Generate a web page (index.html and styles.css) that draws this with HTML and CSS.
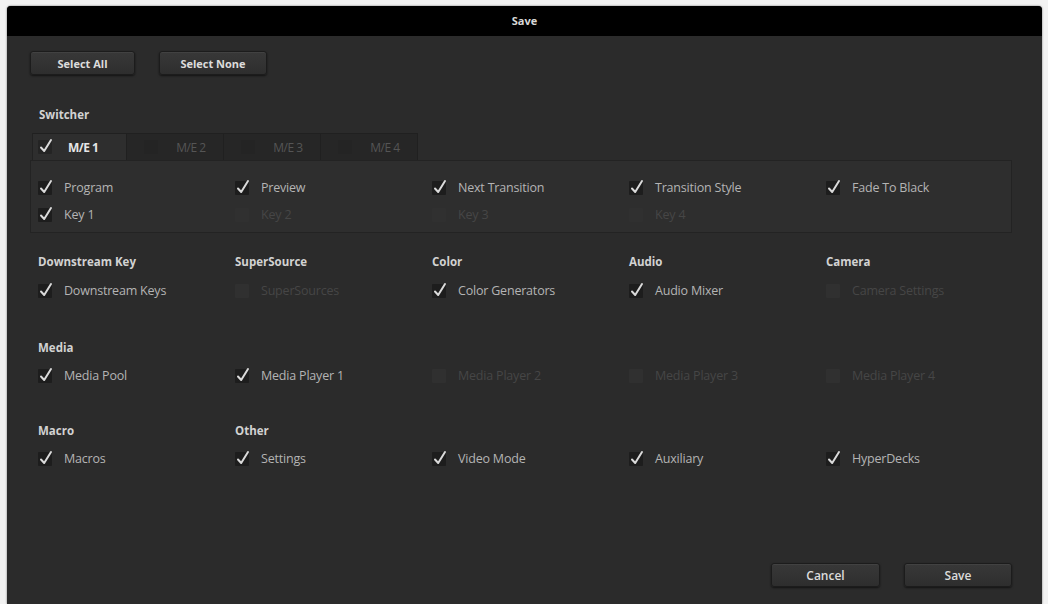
FILE: index.html
```html
<!DOCTYPE html>
<html>
<head>
<meta charset="utf-8">
<link rel="stylesheet" href="styles.css">
</head>
<body>
<div class="dialog">
  <div class="titlebar">Save</div>
  <div class="content">
    <div class="top-buttons">
      <button class="btn btn-all">Select All</button>
      <button class="btn btn-none">Select None</button>
    </div>

    <div class="section-title">Switcher</div>
    <div class="tabs">
      <div class="tab active"><span class="cb on"><svg viewBox="0 0 16 16"><rect x="0" y="2" width="14" height="14" rx="1"/><path d="M3 9.5 L6.2 13 L13 2"/></svg></span>M/E 1</div>
      <div class="tab"><span class="cb"><svg viewBox="0 0 16 16"><rect x="0" y="2" width="14" height="14" rx="1"/></svg></span>M/E 2</div>
      <div class="tab"><span class="cb"><svg viewBox="0 0 16 16"><rect x="0" y="2" width="14" height="14" rx="1"/></svg></span>M/E 3</div>
      <div class="tab"><span class="cb"><svg viewBox="0 0 16 16"><rect x="0" y="2" width="14" height="14" rx="1"/></svg></span>M/E 4</div>
    </div>
    <div class="panel">
      <div class="grid">
        <div class="item"><span class="cb on"><svg viewBox="0 0 16 16"><rect x="0" y="2" width="14" height="14" rx="1"/><path d="M3 9.5 L6.2 13 L13 2"/></svg></span>Program</div>
        <div class="item"><span class="cb on"><svg viewBox="0 0 16 16"><rect x="0" y="2" width="14" height="14" rx="1"/><path d="M3 9.5 L6.2 13 L13 2"/></svg></span>Preview</div>
        <div class="item"><span class="cb on"><svg viewBox="0 0 16 16"><rect x="0" y="2" width="14" height="14" rx="1"/><path d="M3 9.5 L6.2 13 L13 2"/></svg></span>Next Transition</div>
        <div class="item"><span class="cb on"><svg viewBox="0 0 16 16"><rect x="0" y="2" width="14" height="14" rx="1"/><path d="M3 9.5 L6.2 13 L13 2"/></svg></span>Transition Style</div>
        <div class="item"><span class="cb on"><svg viewBox="0 0 16 16"><rect x="0" y="2" width="14" height="14" rx="1"/><path d="M3 9.5 L6.2 13 L13 2"/></svg></span>Fade To Black</div>
        <div class="item"><span class="cb on"><svg viewBox="0 0 16 16"><rect x="0" y="2" width="14" height="14" rx="1"/><path d="M3 9.5 L6.2 13 L13 2"/></svg></span>Key 1</div>
        <div class="item off"><span class="cb"><svg viewBox="0 0 16 16"><rect x="0" y="2" width="14" height="14" rx="1"/></svg></span>Key 2</div>
        <div class="item off"><span class="cb"><svg viewBox="0 0 16 16"><rect x="0" y="2" width="14" height="14" rx="1"/></svg></span>Key 3</div>
        <div class="item off"><span class="cb"><svg viewBox="0 0 16 16"><rect x="0" y="2" width="14" height="14" rx="1"/></svg></span>Key 4</div>
      </div>
    </div>

    <div class="group g-first">
      <div class="grid heads">
        <div class="head">Downstream Key</div>
        <div class="head">SuperSource</div>
        <div class="head">Color</div>
        <div class="head">Audio</div>
        <div class="head">Camera</div>
      </div>
      <div class="grid">
        <div class="item"><span class="cb on"><svg viewBox="0 0 16 16"><rect x="0" y="2" width="14" height="14" rx="1"/><path d="M3 9.5 L6.2 13 L13 2"/></svg></span>Downstream Keys</div>
        <div class="item off"><span class="cb"><svg viewBox="0 0 16 16"><rect x="0" y="2" width="14" height="14" rx="1"/></svg></span>SuperSources</div>
        <div class="item"><span class="cb on"><svg viewBox="0 0 16 16"><rect x="0" y="2" width="14" height="14" rx="1"/><path d="M3 9.5 L6.2 13 L13 2"/></svg></span>Color Generators</div>
        <div class="item"><span class="cb on"><svg viewBox="0 0 16 16"><rect x="0" y="2" width="14" height="14" rx="1"/><path d="M3 9.5 L6.2 13 L13 2"/></svg></span>Audio Mixer</div>
        <div class="item off"><span class="cb"><svg viewBox="0 0 16 16"><rect x="0" y="2" width="14" height="14" rx="1"/></svg></span>Camera Settings</div>
      </div>
    </div>

    <div class="group">
      <div class="grid heads">
        <div class="head">Media</div>
      </div>
      <div class="grid">
        <div class="item"><span class="cb on"><svg viewBox="0 0 16 16"><rect x="0" y="2" width="14" height="14" rx="1"/><path d="M3 9.5 L6.2 13 L13 2"/></svg></span>Media Pool</div>
        <div class="item"><span class="cb on"><svg viewBox="0 0 16 16"><rect x="0" y="2" width="14" height="14" rx="1"/><path d="M3 9.5 L6.2 13 L13 2"/></svg></span>Media Player 1</div>
        <div class="item off"><span class="cb"><svg viewBox="0 0 16 16"><rect x="0" y="2" width="14" height="14" rx="1"/></svg></span>Media Player 2</div>
        <div class="item off"><span class="cb"><svg viewBox="0 0 16 16"><rect x="0" y="2" width="14" height="14" rx="1"/></svg></span>Media Player 3</div>
        <div class="item off"><span class="cb"><svg viewBox="0 0 16 16"><rect x="0" y="2" width="14" height="14" rx="1"/></svg></span>Media Player 4</div>
      </div>
    </div>

    <div class="group g-last">
      <div class="grid heads">
        <div class="head">Macro</div>
        <div class="head">Other</div>
      </div>
      <div class="grid">
        <div class="item"><span class="cb on"><svg viewBox="0 0 16 16"><rect x="0" y="2" width="14" height="14" rx="1"/><path d="M3 9.5 L6.2 13 L13 2"/></svg></span>Macros</div>
        <div class="item"><span class="cb on"><svg viewBox="0 0 16 16"><rect x="0" y="2" width="14" height="14" rx="1"/><path d="M3 9.5 L6.2 13 L13 2"/></svg></span>Settings</div>
        <div class="item"><span class="cb on"><svg viewBox="0 0 16 16"><rect x="0" y="2" width="14" height="14" rx="1"/><path d="M3 9.5 L6.2 13 L13 2"/></svg></span>Video Mode</div>
        <div class="item"><span class="cb on"><svg viewBox="0 0 16 16"><rect x="0" y="2" width="14" height="14" rx="1"/><path d="M3 9.5 L6.2 13 L13 2"/></svg></span>Auxiliary</div>
        <div class="item"><span class="cb on"><svg viewBox="0 0 16 16"><rect x="0" y="2" width="14" height="14" rx="1"/><path d="M3 9.5 L6.2 13 L13 2"/></svg></span>HyperDecks</div>
      </div>
    </div>

    <div class="footer">
      <button class="btn btn-cancel">Cancel</button>
      <button class="btn btn-save">Save</button>
    </div>
  </div>
</div>
</body>
</html>
```

FILE: styles.css
```css
html, body {
  margin: 0;
  padding: 0;
  background: #f2f2f2;
  width: 1048px;
  height: 604px;
  overflow: hidden;
  font-family: "Open Sans", "DejaVu Sans", sans-serif;
}

.dialog {
  margin: 6px 6px 0 7px;
  width: 1035px;
  height: 598px;
  background: #2b2b2b;
  border-radius: 4px 4px 0 0;
  box-shadow: 0 0 2px rgba(0,0,0,0.6);
  display: flex;
  flex-direction: column;
  overflow: hidden;
}

.titlebar {
  height: 30px;
  background: #000;
  color: #d8d8d8;
  font-weight: 700;
  font-size: 11px;
  line-height: 30px;
  text-align: center;
  flex: none;
}

.content {
  flex: 1;
  display: flex;
  flex-direction: column;
  padding: 15px 30px 17px 23px;
}

.top-buttons {
  display: flex;
  gap: 24px;
}

.btn {
  height: 24px;
  border: 1px solid #1c1c1c;
  border-radius: 3px;
  background: linear-gradient(#383838, #2e2e2e);
  box-shadow: 0 1px 2px rgba(0,0,0,0.55), inset 0 1px 0 rgba(255,255,255,0.05);
  color: #dcdcdc;
  font-family: "Open Sans", "DejaVu Sans", sans-serif;
  font-weight: 700;
  font-size: 11px;
  padding: 0;
  cursor: pointer;
}
.btn-all { width: 105px; }
.btn-none { width: 108px; }
.btn-cancel { width: 109px; font-weight: 600; font-size: 12px; }
.btn-save { width: 108px; font-weight: 600; font-size: 12px; }

.section-title {
  margin-top: 32px;
  margin-left: 9px;
  font-size: 11.5px;
  font-weight: 700;
  color: #d2d2d2;
  line-height: 16px;
}

.tabs {
  margin-top: 10px;
  margin-left: 2px;
  display: flex;
  height: 27px;
}

.tab {
  width: 97px;
  height: 27px;
  display: flex;
  align-items: center;
  justify-content: center;
  box-sizing: border-box;
  background: #262626;
  border: 1px solid #202020;
  border-bottom: none;
  border-left: none;
  color: #555;
  font-size: 12px;
  letter-spacing: -0.5px;
}
.tab .cb { margin-right: 16px; }
.tab .cb rect { fill: #242424; }
.tab.active {
  width: 95px;
  background: #2e2e2e;
  color: #e6e6e6;
  font-weight: 700;
  justify-content: flex-start;
  padding-left: 5px;
  border-left: 1px solid #222;
}
.tab.active .cb { margin-right: 14px; }

.panel {
  height: 73px;
  box-sizing: border-box;
  background: #2e2e2e;
  border: 1px solid #232323;
  padding: 13px 0 0 7px;
}

.grid {
  display: grid;
  grid-template-columns: repeat(5, 197px);
}

.panel .grid { grid-auto-rows: 27px; }

.item {
  display: flex;
  align-items: center;
  height: 27px;
  color: #b4b4b4;
  font-size: 12.5px;
  letter-spacing: -0.2px;
  white-space: nowrap;
}
.item.off { color: #464646; }

.cb {
  width: 16px;
  height: 16px;
  margin-right: 10px;
  margin-top: -2px;
  flex: none;
  display: inline-block;
}
.cb svg {
  width: 16px;
  height: 16px;
  display: block;
  overflow: visible;
}
.cb rect { fill: #1d1d1d; }
.item.off .cb rect { fill: #303030; }
.cb path {
  fill: none;
  stroke: #dadada;
  stroke-width: 2;
  stroke-linecap: round;
  stroke-linejoin: round;
}

.group { margin-top: 36px; }
.group.g-first { margin-top: 21px; }
.group.g-last { margin-top: 34px; }
.group > .grid { margin-left: 8px; }
.group .grid + .grid { margin-top: 6px; }
.group.g-first .grid + .grid { margin-top: 7px; }

.heads { height: 16px; }
.head {
  font-size: 11.5px;
  font-weight: 700;
  color: #d2d2d2;
  line-height: 16px;
  white-space: nowrap;
}

.footer {
  margin-top: auto;
  display: flex;
  justify-content: flex-end;
  gap: 24px;
}
```
